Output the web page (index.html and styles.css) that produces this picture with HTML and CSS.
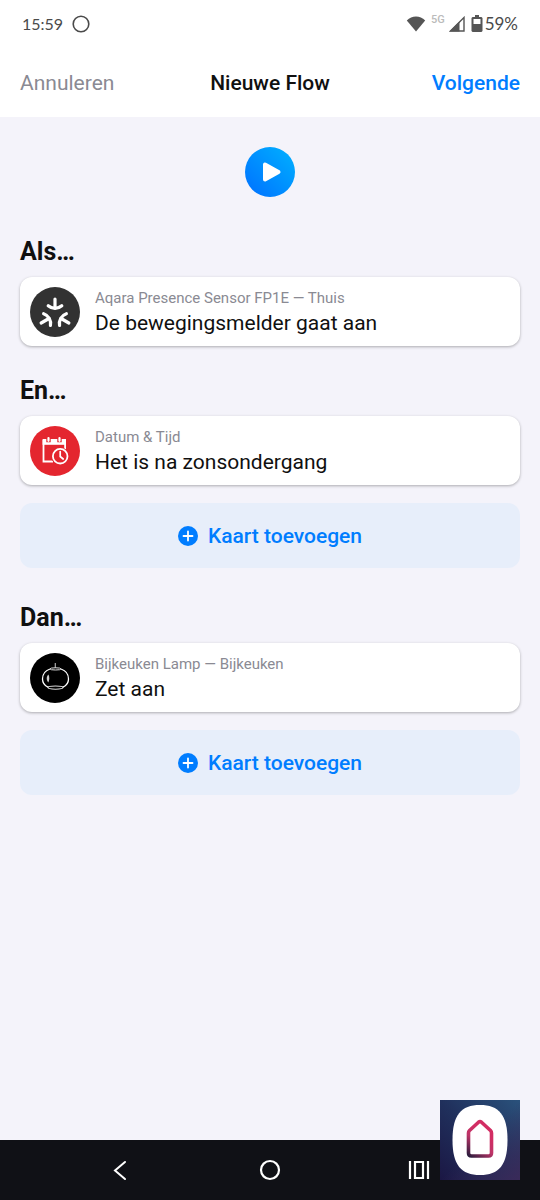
FILE: index.html
```html
<!DOCTYPE html>
<html lang="nl">
<head>
<meta charset="utf-8">
<meta name="viewport" content="width=device-width, initial-scale=1">
<title>Nieuwe Flow</title>
<link rel="stylesheet" href="styles.css">
</head>
<body>
<div class="status">
  <div class="status-group status-left">
    <span class="time">15:59</span>
    <svg width="18" height="18" viewBox="0 0 18 18" fill="none" stroke="#4a4a4a" stroke-width="1.6" aria-hidden="true"><circle cx="9" cy="9" r="7.8"/></svg>
  </div>
  <div class="status-group">
    <svg width="20" height="16" viewBox="0 0 20 16" fill="#555" aria-hidden="true"><path d="M10 15.5 .8 4.500C3.500 1.900 6.500.5 10 .5s6.500 1.400 9.200 4z"/></svg>
    <span class="network">5G</span>
    <svg class="signal" width="16" height="16" viewBox="0 0 16 16" aria-hidden="true"><path d="M1.500 15H15V1.500z" fill="none" stroke="#555" stroke-width="1.400"/><path d="M.5 15.500 10.500 5.500v10z" fill="#555"/></svg>
    <svg class="battery" width="12" height="18" viewBox="0 0 12 18" aria-hidden="true"><path d="M4 0h4v2h2.500l1 1v13l-1 1h-9l-1-1V3l1-1H4z" fill="#555"/><path d="M2.500 4h7v5h-7z" fill="#fff"/></svg>
    <span>59%</span>
  </div>
</div>
<header class="topbar">
  <button class="cancel" type="button">Annuleren</button>
  <h1>Nieuwe Flow</h1>
  <button class="next" type="button">Volgende</button>
</header>
<main class="flow">
  <button class="play" type="button" aria-label="Flow testen">
    <svg width="50" height="50" viewBox="0 0 50 50" aria-hidden="true"><path d="M20 17.500v15L33.500 25z" fill="#fff" stroke="#fff" stroke-width="4" stroke-linejoin="round"/></svg>
  </button>
  <section class="group">
    <h2>Als…</h2>
    <button class="card" type="button">
      <svg class="icon" viewBox="0 0 50 50" aria-hidden="true">
        <circle cx="25" cy="25" r="25" fill="#323232"/>
        <g id="arm" fill="none" stroke="#fff" stroke-width="3.200" stroke-linecap="round"><path d="M25 12V21"/><path d="M18.200 18.800C22 22.200 28 22.200 31.800 18.800"/></g>
        <use href="#arm" transform="rotate(120 25 28)"/>
        <use href="#arm" transform="rotate(240 25 28)"/>
      </svg>
      <span class="copy"><span class="source">Aqara Presence Sensor FP1E — Thuis</span><span class="action">De bewegingsmelder gaat aan</span></span>
    </button>
  </section>
  <section class="group">
    <h2>En…</h2>
    <button class="card" type="button">
      <svg class="icon" viewBox="0 0 50 50" aria-hidden="true">
        <circle cx="25" cy="25" r="25" fill="#e4262f"/>
        <path d="M12.600 13H36V18.800H12.600z" fill="#fff"/>
        <path d="M23 35.500H13.500V14M35.100 14V24" fill="none" stroke="#fff" stroke-width="1.800"/>
        <path d="M18.500 11v5.200M29.500 11v5.200" stroke="#e4262f" stroke-width="4.400"/>
        <path d="M18.500 12v2.800M29.500 12v2.800" stroke="#fff" stroke-width="2.200" stroke-linecap="round"/>
        <circle cx="30.200" cy="30.200" r="9" fill="#e4262f"/>
        <circle cx="30.200" cy="30.200" r="7.300" fill="#e4262f" stroke="#fff" stroke-width="1.800"/>
        <path d="M30.200 25.500v5l3 2.500" fill="none" stroke="#fff" stroke-width="1.700" stroke-linecap="round"/>
      </svg>
      <span class="copy"><span class="source">Datum &amp; Tijd</span><span class="action">Het is na zonsondergang</span></span>
    </button>
    <button class="add" type="button">
      <svg width="20" height="20" viewBox="0 0 20 20" aria-hidden="true"><circle cx="10" cy="10" r="10" fill="#007dff"/><path d="M10 5.500v9M5.500 10h9" stroke="#fff" stroke-width="1.800" stroke-linecap="round"/></svg>
      Kaart toevoegen
    </button>
  </section>
  <section class="group">
    <h2>Dan…</h2>
    <button class="card" type="button">
      <svg class="icon" viewBox="0 0 50 50" aria-hidden="true">
        <circle cx="25" cy="25" r="25" fill="#000"/>
        <path d="M25.300 10V15" stroke="#aaa" stroke-width="1.200"/>
        <path d="M20 16C15.500 17.500 12.500 21.500 12.500 26C12.500 29.500 14.500 32.500 18 34.200H33C36.500 32.500 38.500 29.500 38.500 26C38.500 21.500 35.500 17.500 31 16" fill="none" stroke="#fff" stroke-width="1.300"/>
        <ellipse cx="25.500" cy="15.900" rx="5.500" ry="1.100" fill="none" stroke="#ddd" stroke-width="1"/>
        <ellipse cx="25.500" cy="34.600" rx="7.500" ry="1.600" fill="#000" stroke="#ddd" stroke-width="1.100"/>
        <path d="M18.500 21.500c-2.300 2-2.300 5.500-.2 8 1.300-2.500 1.300-5.500.2-8z" fill="#ccc"/>
      </svg>
      <span class="copy"><span class="source">Bijkeuken Lamp — Bijkeuken</span><span class="action">Zet aan</span></span>
    </button>
    <button class="add" type="button">
      <svg width="20" height="20" viewBox="0 0 20 20" aria-hidden="true"><circle cx="10" cy="10" r="10" fill="#007dff"/><path d="M10 5.500v9M5.500 10h9" stroke="#fff" stroke-width="1.800" stroke-linecap="round"/></svg>
      Kaart toevoegen
    </button>
  </section>
</main>
<nav class="system" aria-label="Systeemnavigatie">
  <button type="button" aria-label="Terug"><svg width="22" height="22" viewBox="0 0 22 22" fill="none" stroke="#fff" stroke-width="2" stroke-linecap="round" aria-hidden="true"><path d="M15 3 5 11.500l10 8.500"/></svg></button>
  <button type="button" aria-label="Start"><svg width="22" height="22" viewBox="0 0 22 22" fill="none" stroke="#fff" stroke-width="2.200" aria-hidden="true"><circle cx="11" cy="11" r="9"/></svg></button>
  <button type="button" aria-label="Recente apps"><svg width="22" height="22" viewBox="0 0 22 22" fill="none" stroke="#fff" stroke-width="2.200" aria-hidden="true"><path d="M2 2v18M20 2v18M7 3h8v16H7z"/></svg></button>
  <svg class="brand" viewBox="0 0 80 80" role="img" aria-label="Homey">
    <defs>
      <linearGradient id="night" x1="0" y1="1" x2="1" y2="0"><stop offset="0" stop-color="#1b1744"/><stop offset=".5" stop-color="#20305c"/><stop offset="1" stop-color="#2a527c"/></linearGradient>
      <linearGradient id="dusk" x1="0" y1="0" x2="1" y2="1"><stop offset=".5" stop-color="#3a2a59" stop-opacity="0"/><stop offset="1" stop-color="#3a2a59"/></linearGradient>
      <linearGradient id="house" gradientUnits="userSpaceOnUse" x1="28" y1="57" x2="46" y2="34"><stop offset="0" stop-color="#211a3a"/><stop offset=".6" stop-color="#bd3467"/><stop offset="1" stop-color="#d22d63"/></linearGradient>
    </defs>
    <path d="M0 0h80v80H0z" fill="url(#night)"/><path d="M0 0h80v80H0z" fill="url(#dusk)"/>
    <path d="M40 5C59 5 67.500 15 67.500 40S59 75 40 75 12.500 65 12.500 40 21 5 40 5z" fill="#fff"/>
    <path d="M38.500 22.200 29.500 30.500Q28.500 31.500 28.500 33V53q0 3 3 3h17q3 0 3-3V33q0-1.500-1-2.500L41.500 22.200q-1.500-1.200-3 0z" fill="none" stroke="url(#house)" stroke-width="3.600" stroke-linejoin="round"/>
  </svg>
</nav>
</body>
</html>
```
FILE: styles.css
```css
* { box-sizing: border-box; }
body {
  margin: 0;
  min-height: 100vh;
  display: flex;
  flex-direction: column;
  background: #f4f3fa;
  color: #101010;
  font-family: Roboto, "Liberation Sans", sans-serif;
}
button {
  margin: 0;
  padding: 0;
  border: 0;
  background: none;
  color: inherit;
  font: inherit;
  cursor: pointer;
}
svg { display: block; flex: none; }
h1, h2 { margin: 0; }

.status {
  height: 48px;
  padding: 0 22px;
  display: flex;
  align-items: center;
  justify-content: space-between;
  background: #fff;
  color: #4a4a4a;
  font: 17px/20px Lato, sans-serif;
}
.status-group { display: flex; align-items: center; }
.status-left { gap: 9px; }
.time { font-size: 16px; }
.network {
  margin: 0 4px 8px 5px;
  color: #bbb;
  font: 500 11px/12px Roboto, sans-serif;
}
.signal { margin-right: 6px; }
.battery { margin-right: 2px; }

.topbar {
  height: 69px;
  padding: 0 20px;
  display: grid;
  grid-template-columns: 1fr auto 1fr;
  align-items: center;
  background: #fff;
  font-size: 21px;
  line-height: 28px;
}
.topbar h1 { font-size: 21px; font-weight: 500; }
.cancel { justify-self: start; color: #8a8a93; }
.next { justify-self: end; color: #007dff; font-weight: 500; }

.flow {
  padding: 30px 20px;
  display: flex;
  flex-direction: column;
  gap: 30px;
}
.play {
  align-self: center;
  margin-bottom: 10px;
  border-radius: 50%;
  background: linear-gradient(45deg, #006fff, #00b2ff);
}
.group { display: flex; flex-direction: column; }
.group h2 {
  margin-bottom: 10px;
  font-size: 25px;
  line-height: 30px;
  font-weight: 700;
}
.card {
  min-height: 69px;
  padding: 9px 10px;
  display: flex;
  align-items: center;
  gap: 15px;
  border-radius: 12px;
  background: #fff;
  box-shadow: 0 1px 3px rgba(0, 0, 0, .3);
  text-align: left;
}
.icon { width: 50px; height: 50px; }
.copy { display: flex; flex-direction: column; padding-top: 2px; }
.source { color: #8a8a93; font-size: 15px; line-height: 21px; }
.action { font-size: 21px; line-height: 28px; }
.add {
  min-height: 65px;
  margin: 18px 0 5px;
  display: flex;
  align-items: center;
  justify-content: center;
  gap: 10px;
  border-radius: 12px;
  background: #e7eefa;
  color: #007dff;
  font-size: 21px;
  font-weight: 500;
}

.system {
  position: relative;
  height: 60px;
  margin-top: auto;
  padding: 0 47px;
  display: grid;
  grid-template-columns: repeat(3, 1fr);
  place-items: center;
  background: #101116;
}
.brand {
  position: absolute;
  right: 20px;
  bottom: 20px;
  width: 80px;
  height: 80px;
}
```
